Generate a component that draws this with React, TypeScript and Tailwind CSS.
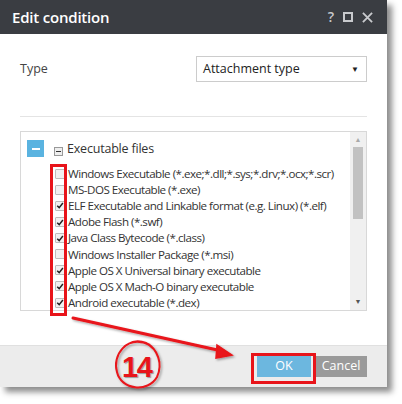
import React from 'react';

const font = { fontFamily: '"Open Sans", "Noto Sans", sans-serif' };

const items: { label: string; checked: boolean }[] = [
  { label: 'Windows Executable (*.exe;*.dll;*.sys;*.drv;*.ocx;*.scr)', checked: false },
  { label: 'MS-DOS Executable (*.exe)', checked: false },
  { label: 'ELF Executable and Linkable format (e.g. Linux) (*.elf)', checked: true },
  { label: 'Adobe Flash (*.swf)', checked: true },
  { label: 'Java Class Bytecode (*.class)', checked: true },
  { label: 'Windows Installer Package (*.msi)', checked: false },
  { label: 'Apple OS X Universal binary executable', checked: true },
  { label: 'Apple OS X Mach-O binary executable', checked: true },
  { label: 'Android executable (*.dex)', checked: true },
];

function Checkbox({ checked }: { checked: boolean }) {
  return (
    <span className="w-[10px] h-[10px] border border-[#bdbdbd] bg-[#f1f1f1] rounded-[1px] flex items-center justify-center shrink-0">
      {checked && (
        <svg viewBox="0 0 10 10" className="w-[9px] h-[9px]">
          <path d="M1.5 5.2 L4 7.6 L8.6 1.8" fill="none" stroke="#222" strokeWidth={1.8} />
        </svg>
      )}
    </span>
  );
}

export default function App() {
  return (
    <div className="relative w-[402px] h-[404px] bg-white overflow-hidden" style={font}>
      {/* dialog */}
      <div className="w-[387px] h-[387px] flex flex-col bg-white shadow-[5px_5px_6px_rgba(0,0,0,0.45)]">
        <div className="h-[34px] bg-[#3a3d42] flex items-center pl-[12px] pr-[14px] shrink-0">
          <span className="text-white font-semibold text-[15px] tracking-[-0.2px]">Edit condition</span>
          <div className="ml-auto flex items-center gap-[9px] text-[#c8cacd]">
            <span className="text-[14px] font-semibold leading-none">?</span>
            <span className="w-[10px] h-[10px] border-2 border-[#c8cacd]" />
            <svg viewBox="0 0 12 12" className="w-[11px] h-[11px]">
              <path d="M1 1 L11 11 M11 1 L1 11" stroke="#c8cacd" strokeWidth={2} />
            </svg>
          </div>
        </div>

        <div className="flex-1 px-[20px] pt-[22px]">
          <div className="flex items-center justify-between">
            <span className="text-[12.5px] text-[#444]">Type</span>
            <div className="w-[171px] h-[26px] border border-[#ccc] flex items-center pl-[6px] pr-[7px] text-[12.5px] text-[#222]">
              Attachment type
              <span className="ml-auto text-[8px]">▼</span>
            </div>
          </div>

          <div className="h-px bg-[#e4e4e4] mt-[34px]" />

          <div className="mt-[14px] h-[180px] border border-[#d8d8d8] flex">
            <div className="flex-1 pl-[6px] pt-[7px]">
              <div className="flex items-center">
                <span className="w-[17px] h-[17px] bg-[#5ab3e0] flex items-center justify-center">
                  <span className="w-[8px] h-[2px] bg-white" />
                </span>
                <span className="ml-[10px] w-[9px] h-[9px] border border-[#999] bg-[#eee] flex items-center justify-center mt-[5px]">
                  <span className="w-[5px] h-px bg-[#333]" />
                </span>
                <span className="ml-[4px] text-[12.5px] text-[#333] mt-[1px] tracking-[-0.2px]">Executable files</span>
              </div>
              <div className="mt-[7px] pl-[28px] flex flex-col">
                {items.map((it) => (
                  <div key={it.label} className="h-[16.1px] flex items-center gap-[3px]">
                    <Checkbox checked={it.checked} />
                    <span className="text-[11.6px] text-[#333] whitespace-nowrap tracking-[-0.5px]">{it.label}</span>
                  </div>
                ))}
              </div>
            </div>
            <div className="w-[16px] bg-[#f0f0f0] flex flex-col items-center">
              <span className="text-[7px] text-[#aaa] mt-[4px] leading-none">▲</span>
              <div className="w-[10px] h-[72px] bg-[#c2c2c2] mt-[4px]" />
              <span className="text-[7px] text-[#555] mt-auto mb-[5px] leading-none">▼</span>
            </div>
          </div>
        </div>

        <div className="h-[42px] bg-[#ececec] border-t border-[#e0e0e0] flex items-center justify-end pr-[20px] gap-[4px] shrink-0">
          <button className="w-[54px] h-[21px] bg-[#6cb7df] text-white text-[12.5px]">OK</button>
          <button className="w-[52px] h-[21px] bg-[#9a9a9a] text-white text-[12.5px]">Cancel</button>
        </div>
      </div>

      {/* annotations */}
      <div className="absolute left-[50px] top-[164px] w-[17px] h-[152px] border-[3px] border-[#e8141a]" />
      <div className="absolute left-[251px] top-[353px] w-[65px] h-[31px] border-[3px] border-[#e8141a]" />
      <svg className="absolute left-0 top-0 w-[402px] h-[404px] pointer-events-none" viewBox="0 0 402 404">
        <defs>
          <filter id="ds" x="-20%" y="-20%" width="140%" height="140%">
            <feDropShadow dx="1.5" dy="1.5" stdDeviation="1" floodColor="#000" floodOpacity="0.35" />
          </filter>
        </defs>
        <g filter="url(#ds)">
          <path d="M73 318 L222 351" stroke="#e8141a" strokeWidth={3} strokeLinecap="round" />
          <path d="M232 355 L217 345 L216 358 Z" fill="#e8141a" stroke="#e8141a" strokeWidth={1.5} />
          <path d="M150 345 C 126 334, 112 356, 117 372 C 121 390, 148 393, 157 377 C 163 364, 158 349, 146 343 C 139 340, 133 341, 128 344" fill="none" stroke="#e8141a" strokeWidth={2} />
        </g>
      </svg>
      <span className="absolute left-[122px] top-[353px] text-[29px] font-bold text-[#e8141a] leading-none tracking-[-1.5px]" style={{ fontFamily: '"Liberation Sans", Arial, sans-serif', textShadow: '1px 1px 1px rgba(0,0,0,0.35)' }}>14</span>
    </div>
  );
}
